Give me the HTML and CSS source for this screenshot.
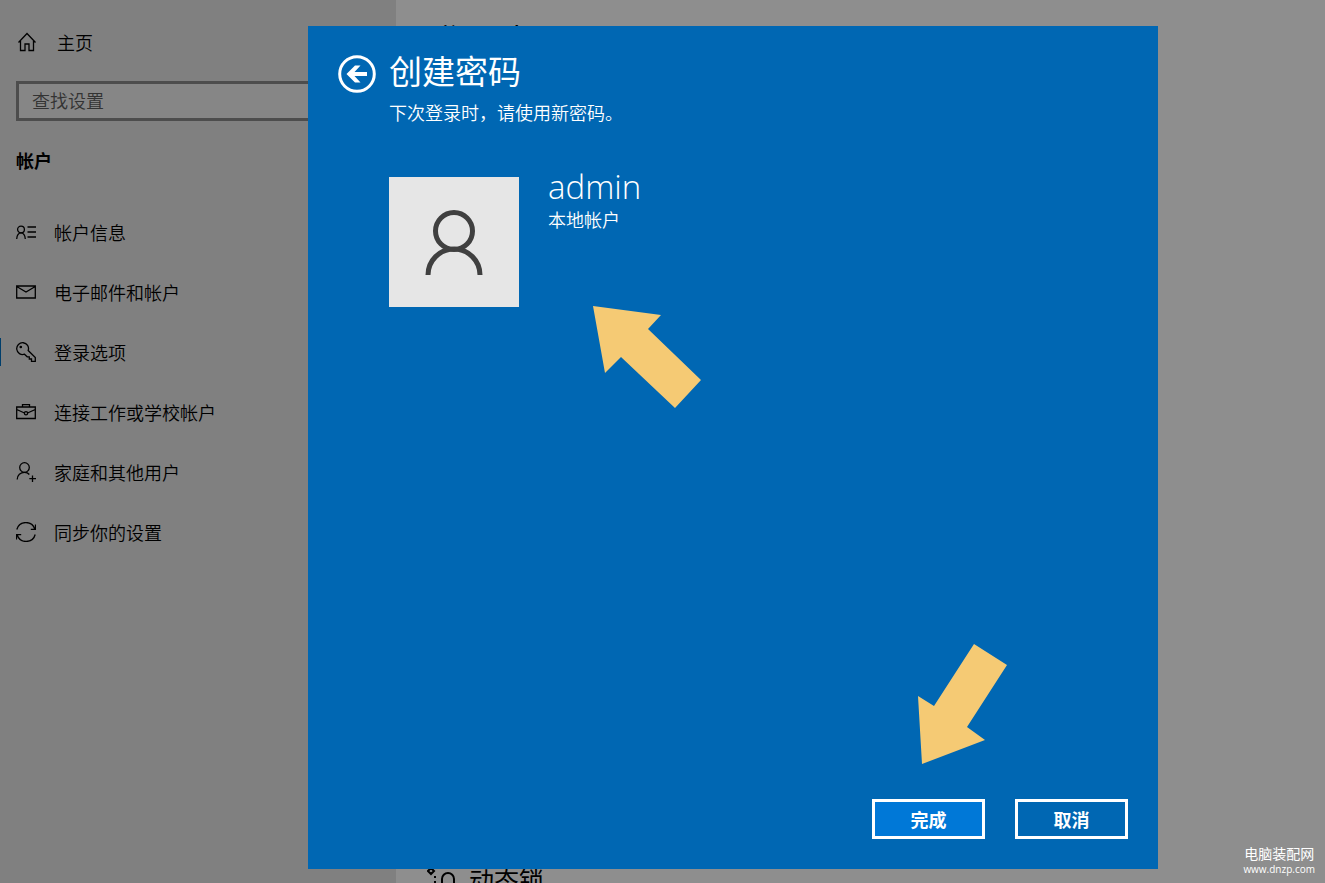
FILE: index.html
```html
<!DOCTYPE html>
<html lang="zh-CN">
<head>
  <meta charset="UTF-8" />
  <meta name="viewport" content="width=device-width, initial-scale=1.0" />
  <title>设置</title>
  <link rel="stylesheet" href="styles.css">
</head>
<body>
  <div class="settings">
    <aside class="sidebar">
      <a href="#" class="home">
        <svg class="icon" viewBox="0 0 20 20"><path d="M1.500 10.500L10 1.500L18.500 10.500M3.500 9V18.500H8V12H12V18.500H16.500V9" /></svg>
        主页
      </a>
      <input type="text" class="search" placeholder="查找设置" aria-label="查找设置" />
      <h2 class="section">帐户</h2>
      <nav>
        <a href="#" class="item">
          <svg class="icon" viewBox="0 0 20 20"><circle cx="5" cy="7.500" r="3.400" /><path d="M0.700 17C1 13.500 2.500 10.900 5 10.900S9 13.500 9.300 17M11.500 5H20M11.500 10H20M11.500 15H20" /></svg>
          帐户信息
        </a>
        <a href="#" class="item">
          <svg class="icon" viewBox="0 0 20 20"><path d="M0.700 4H19.300V16H0.700ZM0.700 4.500L10 10L19.300 4.500" /></svg>
          电子邮件和帐户
        </a>
        <a href="#" class="item active">
          <svg class="icon" viewBox="0 0 20 20"><path d="M8.500 12.200A5.900 5.900 0 1 1 12.200 8.500L19.300 15.600V19.300H15.500V17H13.300V14.800H11.200Z" /><circle cx="4.800" cy="5" r="0.700" /></svg>
          登录选项
        </a>
        <a href="#" class="item">
          <svg class="icon" viewBox="0 0 20 20"><path d="M0.700 5H19.300V16.500H0.700ZM6.500 5V2.700H13.500V5M0.700 7.500L8.500 11M11.500 11L19.300 7.500" /><circle cx="10" cy="11.300" r="1.600" /></svg>
          连接工作或学校帐户
        </a>
        <a href="#" class="item">
          <svg class="icon" viewBox="0 0 20 20"><circle cx="8.500" cy="5.500" r="4.800" /><path d="M1.200 17.500C1.200 13 4.500 10.300 8.500 10.300C10.800 10.300 12.300 11.200 13.300 12.500M16.500 13.500V20M13.300 16.700H20" /></svg>
          家庭和其他用户
        </a>
        <a href="#" class="item">
          <svg class="icon" viewBox="0 0 20 20"><path d="M0.800 7.500A9.400 9.400 0 0 1 18.800 7M19.500 2.500V7.300H14.800M19.200 12.500A9.400 9.400 0 0 1 1.200 13M0.500 17.500V12.700H5.200" /></svg>
          同步你的设置
        </a>
      </nav>
    </aside>
    <main class="content">
      <h1>登录选项</h1>
      <h2 class="lock">
        <svg class="lock-icon" viewBox="0 0 32 32"><path d="M4 1L7 4L4 7L1 4ZM8 9V11M8 14V16M15 28V12A6 6 0 0 1 27 12V28M13 18H29V29H13Z" /></svg>
        动态锁
      </h2>
    </main>
  </div>

  <div class="overlay">
    <section class="dialog" role="dialog" aria-labelledby="dialog-title">
      <header class="dialog-header">
        <button class="back" aria-label="返回">
          <svg viewBox="0 0 38 38"><circle cx="19" cy="19" r="17.300" /><path class="arrow-head" d="M8.500 19L17 10.500H22.500L16.500 17H29V21H16.500L22.500 27.500H17Z" /></svg>
        </button>
        <div>
          <h1 id="dialog-title">创建密码</h1>
          <p>下次登录时，请使用新密码。</p>
        </div>
      </header>
      <div class="user">
        <svg class="avatar" viewBox="0 0 130 130"><circle cx="65" cy="54" r="18.500" /><path d="M39 98A26 26 0 0 1 91 98" /></svg>
        <div class="user-info">
          <div class="user-name">admin</div>
          <div class="user-type">本地帐户</div>
        </div>
      </div>
      <footer class="actions">
        <button class="btn primary">完成</button>
        <button class="btn">取消</button>
      </footer>
      <svg class="pointer pointer-user" viewBox="0 0 108 102"><path d="M0 0L68 9L55 23L108 74L82 102L28 51L12 67Z" /></svg>
      <svg class="pointer pointer-done" viewBox="0 0 90 120"><path d="M57 0L90 21L50 83L68 96L5 120L1 52L17 62Z" /></svg>
    </section>
  </div>

  <div class="watermark">
    <div class="site-name">电脑装配网</div>
    <div class="site-url">www.dnzp.com</div>
  </div>
</body>
</html>
```
FILE: styles.css
```css
* {
  box-sizing: border-box;
}
body {
  margin: 0;
  height: 100vh;
  overflow: hidden;
  position: relative;
  font-family: "Noto Sans CJK SC", sans-serif;
  font-size: 18px;
  font-weight: 350;
  line-height: 28px;
  color: #000;
}
h1, h2, p {
  margin: 0;
}
a {
  color: inherit;
  text-decoration: none;
}
svg {
  display: block;
  fill: none;
}
button {
  font-family: inherit;
  cursor: pointer;
}
.settings {
  display: flex;
  height: 100%;
}
.sidebar {
  flex: 0 0 396px;
  padding-top: 28px;
  background: #808080;
}
.icon {
  width: 20px;
  height: 20px;
  stroke: #000;
  stroke-width: 1.3;
}
.home {
  display: flex;
  align-items: center;
  gap: 20px;
  padding-left: 17px;
}
.search {
  display: block;
  width: 364px;
  height: 40px;
  margin: 25px 16px;
  padding: 0 13px 2px;
  border: 3px solid #4d4d4d;
  border-radius: 0;
  background: #868686;
  font: inherit;
}
.search::placeholder {
  color: #333;
  opacity: 1;
}
.section {
  padding-left: 16px;
  font-size: 18px;
  font-weight: 700;
}
nav {
  display: flex;
  flex-direction: column;
  gap: 32px;
  margin-top: 44px;
}
.item {
  display: flex;
  align-items: center;
  gap: 18px;
  padding-left: 15px;
  border-left: 1px solid transparent;
}
.item.active {
  border-left-color: #003e6b;
}
.content {
  flex: 1;
  display: flex;
  flex-direction: column;
  justify-content: space-between;
  padding: 22px 31px 0;
  background: #8e8e8e;
}
.content h1 {
  font-size: 34px;
  font-weight: 350;
  line-height: 36px;
}
.content .lock {
  display: flex;
  align-items: flex-start;
  gap: 10px;
  height: 16px;
  font-size: 25px;
  font-weight: 400;
  line-height: 24px;
}
.lock-icon {
  width: 32px;
  height: 32px;
  stroke: #000;
  stroke-width: 2;
}

/* dialog lies over the dimmed settings page */
.overlay {
  position: absolute;
  inset: 0;
  display: flex;
  padding: 26px 167px 14px 308px;
}
.dialog {
  position: relative;
  flex: 1;
  display: flex;
  flex-direction: column;
  padding: 24px 30px 30px;
  background: #0067b3;
  color: #fff;
}
.dialog-header {
  display: flex;
  gap: 13px;
}
.back {
  width: 38px;
  height: 38px;
  margin-top: 5px;
  padding: 0;
  border: 0;
  background: none;
}
.back circle {
  stroke: #fff;
  stroke-width: 3;
}
.arrow-head {
  fill: #fff;
}
.dialog-header h1 {
  font-size: 33px;
  font-weight: 400;
  line-height: 40px;
}
.dialog-header p {
  padding-top: 8px;
}
.user {
  display: flex;
  gap: 29px;
  margin: 51px 0 0 51px;
}
.avatar {
  width: 130px;
  height: 130px;
  background: #e6e6e6;
  stroke: #404040;
  stroke-width: 5;
}
.user-info {
  margin-top: -8px;
}
.user-name {
  font-family: "Open Sans", sans-serif;
  font-size: 33px;
  line-height: 36px;
}
.actions {
  display: flex;
  justify-content: flex-end;
  gap: 30px;
  margin-top: auto;
}
.btn {
  width: 113px;
  height: 40px;
  padding: 0;
  border: 3px solid #fff;
  background: #0067b3;
  color: #fff;
  font-size: 18px;
  font-weight: 700;
}
.btn.primary {
  background: #0078d7;
}
.pointer {
  position: absolute;
  fill: #f5ca74;
}
.pointer-user {
  left: 285px;
  top: 280px;
  width: 108px;
}
.pointer-done {
  right: 151px;
  bottom: 105px;
  width: 90px;
}
.watermark {
  position: absolute;
  right: 10px;
  bottom: 8px;
  color: #fff;
  text-align: center;
}
.site-name {
  font-size: 14px;
  font-weight: 400;
  line-height: 20px;
}
.site-url {
  font-family: "Open Sans", sans-serif;
  font-size: 10px;
  font-weight: 400;
  line-height: 12px;
}
```
